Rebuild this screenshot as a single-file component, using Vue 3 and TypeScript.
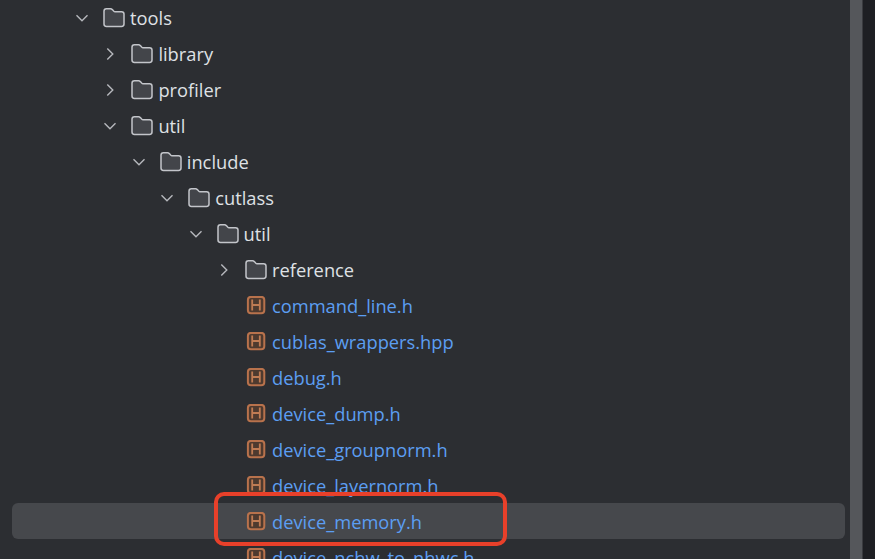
<script setup lang="ts">
interface Row {
  name: string
  depth: number
  kind: 'folder' | 'file'
  open?: boolean
  selected?: boolean
}

const rows: Row[] = [
  { name: 'tools', depth: 0, kind: 'folder', open: true },
  { name: 'library', depth: 1, kind: 'folder' },
  { name: 'profiler', depth: 1, kind: 'folder' },
  { name: 'util', depth: 1, kind: 'folder', open: true },
  { name: 'include', depth: 2, kind: 'folder', open: true },
  { name: 'cutlass', depth: 3, kind: 'folder', open: true },
  { name: 'util', depth: 4, kind: 'folder', open: true },
  { name: 'reference', depth: 5, kind: 'folder' },
  { name: 'command_line.h', depth: 5, kind: 'file' },
  { name: 'cublas_wrappers.hpp', depth: 5, kind: 'file' },
  { name: 'debug.h', depth: 5, kind: 'file' },
  { name: 'device_dump.h', depth: 5, kind: 'file' },
  { name: 'device_groupnorm.h', depth: 5, kind: 'file' },
  { name: 'device_layernorm.h', depth: 5, kind: 'file' },
  { name: 'device_memory.h', depth: 5, kind: 'file', selected: true },
  { name: 'device_nchw_to_nhwc.h', depth: 5, kind: 'file' },
]

const indent = (depth: number) => ({ paddingLeft: `${65 + depth * 28.4}px` })
</script>

<template>
  <div class="window">
    <div class="tree">
      <div
        v-for="(row, i) in rows"
        :key="i"
        class="row"
        :class="{ selected: row.selected }"
        :style="indent(row.depth)"
      >
        <svg v-if="row.kind === 'folder'" class="chevron" viewBox="0 0 16 16" width="16" height="16">
          <path v-if="row.open" d="M2.5 5.2 8 10.7l5.5-5.5" />
          <path v-else d="M5.3 2.5 10.8 8l-5.5 5.5" />
        </svg>
        <span v-else class="chevron" />
        <svg v-if="row.kind === 'folder'" class="icon folder" viewBox="0 0 22 20" width="22" height="20">
          <path d="M1 3.2C1 1.8 2 .8 3.4.8h4.2c.7 0 1.2.3 1.7.8l1.6 1.7c.3.3.6.4 1 .4h6.7c1.4 0 2.4 1 2.4 2.4V16c0 1.4-1 2.4-2.4 2.4H3.4C2 18.4 1 17.4 1 16z" />
        </svg>
        <svg v-else class="icon file" viewBox="0 0 22 20" width="22" height="20">
          <rect x="2.9" y=".9" width="16.4" height="16.4" rx="3" />
          <path d="M7.2 3.6v11M14.8 3.6v11M7.2 9h7.6" />
        </svg>
        <span class="label" :class="{ source: row.kind === 'file' }">{{ row.name }}</span>
      </div>
      <div class="annotation" />
    </div>
    <div class="scrollbar" />
    <div class="strip" />
  </div>
</template>

<style scoped>
.window {
  display: flex;
  height: 559px;
  overflow: hidden;
  background: #2c2e32;
  font-family: "Open Sans", "Noto Sans", sans-serif;
}
.tree {
  position: relative;
  flex: 1;
  min-width: 0;
  overflow: hidden;
}
.row {
  position: relative;
  display: flex;
  align-items: center;
  height: 36px;
  white-space: nowrap;
}
.row.selected::before {
  content: "";
  position: absolute;
  left: 12px;
  right: 5px;
  top: -1px;
  bottom: 1px;
  border-radius: 6px;
  background: #46484c;
}
.chevron {
  position: relative;
  flex: none;
  width: 16px;
  height: 16px;
  margin-left: 9px;
  fill: none;
  stroke: #b6b8bd;
  stroke-width: 1.4;
}
.icon {
  position: relative;
  flex: none;
  margin-left: 13px;
}
.folder path {
  fill: #43454a;
  stroke: #c3c5ca;
  stroke-width: 1.5;
}
.file rect {
  fill: #4e3a2f;
  stroke: #b8724c;
  stroke-width: 2;
}
.file path {
  fill: none;
  stroke: #c07c54;
  stroke-width: 1.8;
}
.label {
  position: relative;
  margin-left: 5px;
  margin-bottom: 2px;
  font-size: 18.3px;
  color: #dfe1e5;
}
.label.source {
  color: #5c9ef2;
}
.annotation {
  position: absolute;
  left: 214px;
  top: 492px;
  width: 293px;
  height: 54px;
  box-sizing: border-box;
  border: 4px solid #e8402a;
  border-radius: 10px;
}
.scrollbar {
  flex: none;
  width: 12px;
  background: #55575b;
}
.strip {
  flex: none;
  width: 13px;
  background: #1e1f23;
  border-left: 1px solid #3a3b3f;
  box-sizing: border-box;
}
</style>
